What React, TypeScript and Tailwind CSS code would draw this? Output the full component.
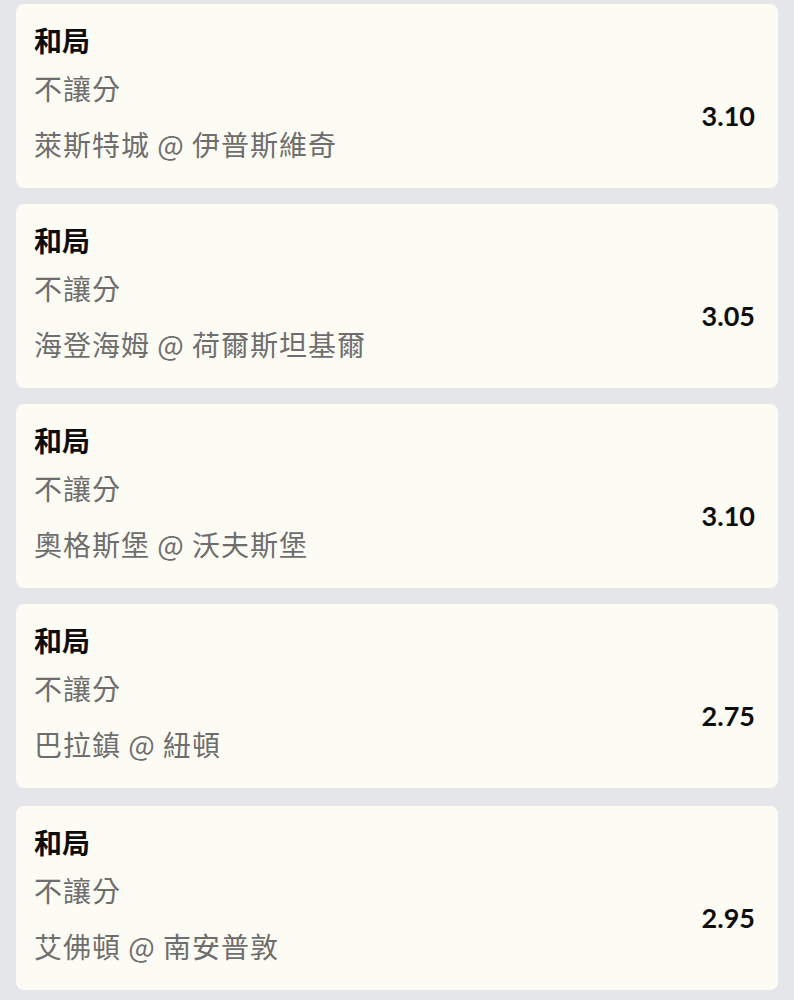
const bets = [
  { match: "萊斯特城 @ 伊普斯維奇", odds: "3.10" },
  { match: "海登海姆 @ 荷爾斯坦基爾", odds: "3.05" },
  { match: "奧格斯堡 @ 沃夫斯堡", odds: "3.10" },
  { match: "巴拉鎮 @ 紐頓", odds: "2.75" },
  { match: "艾佛頓 @ 南安普敦", odds: "2.95" },
];

export default function App() {
  return (
    <div className="min-h-[1000px] w-[794px] bg-[#e5e6ea] px-4 pt-1 font-['Lato','Noto_Sans_CJK_TC',sans-serif]">
      <div className="flex flex-col gap-4">
        {bets.map((b, i) => (
          <div key={i} className="h-[184px] rounded-lg bg-[#fdfcf4] pl-[18px] pr-[23px] pt-[19px] last:mt-0.5">
            <div className="text-[28px] font-bold leading-9 text-[#0d0d0d]">和局</div>
            <div className="mt-[11px] flex items-center justify-between">
              <div className="flex flex-col gap-5 font-['Noto_Sans_CJK_TC',sans-serif] text-[28px] leading-9 tracking-[1px] text-[#6e6e6e]">
                <span>不讓分</span>
                <span>{b.match}</span>
              </div>
              <span className="text-[27px] font-bold leading-9 text-[#0d0d0d]">{b.odds}</span>
            </div>
          </div>
        ))}
      </div>
    </div>
  );
}
